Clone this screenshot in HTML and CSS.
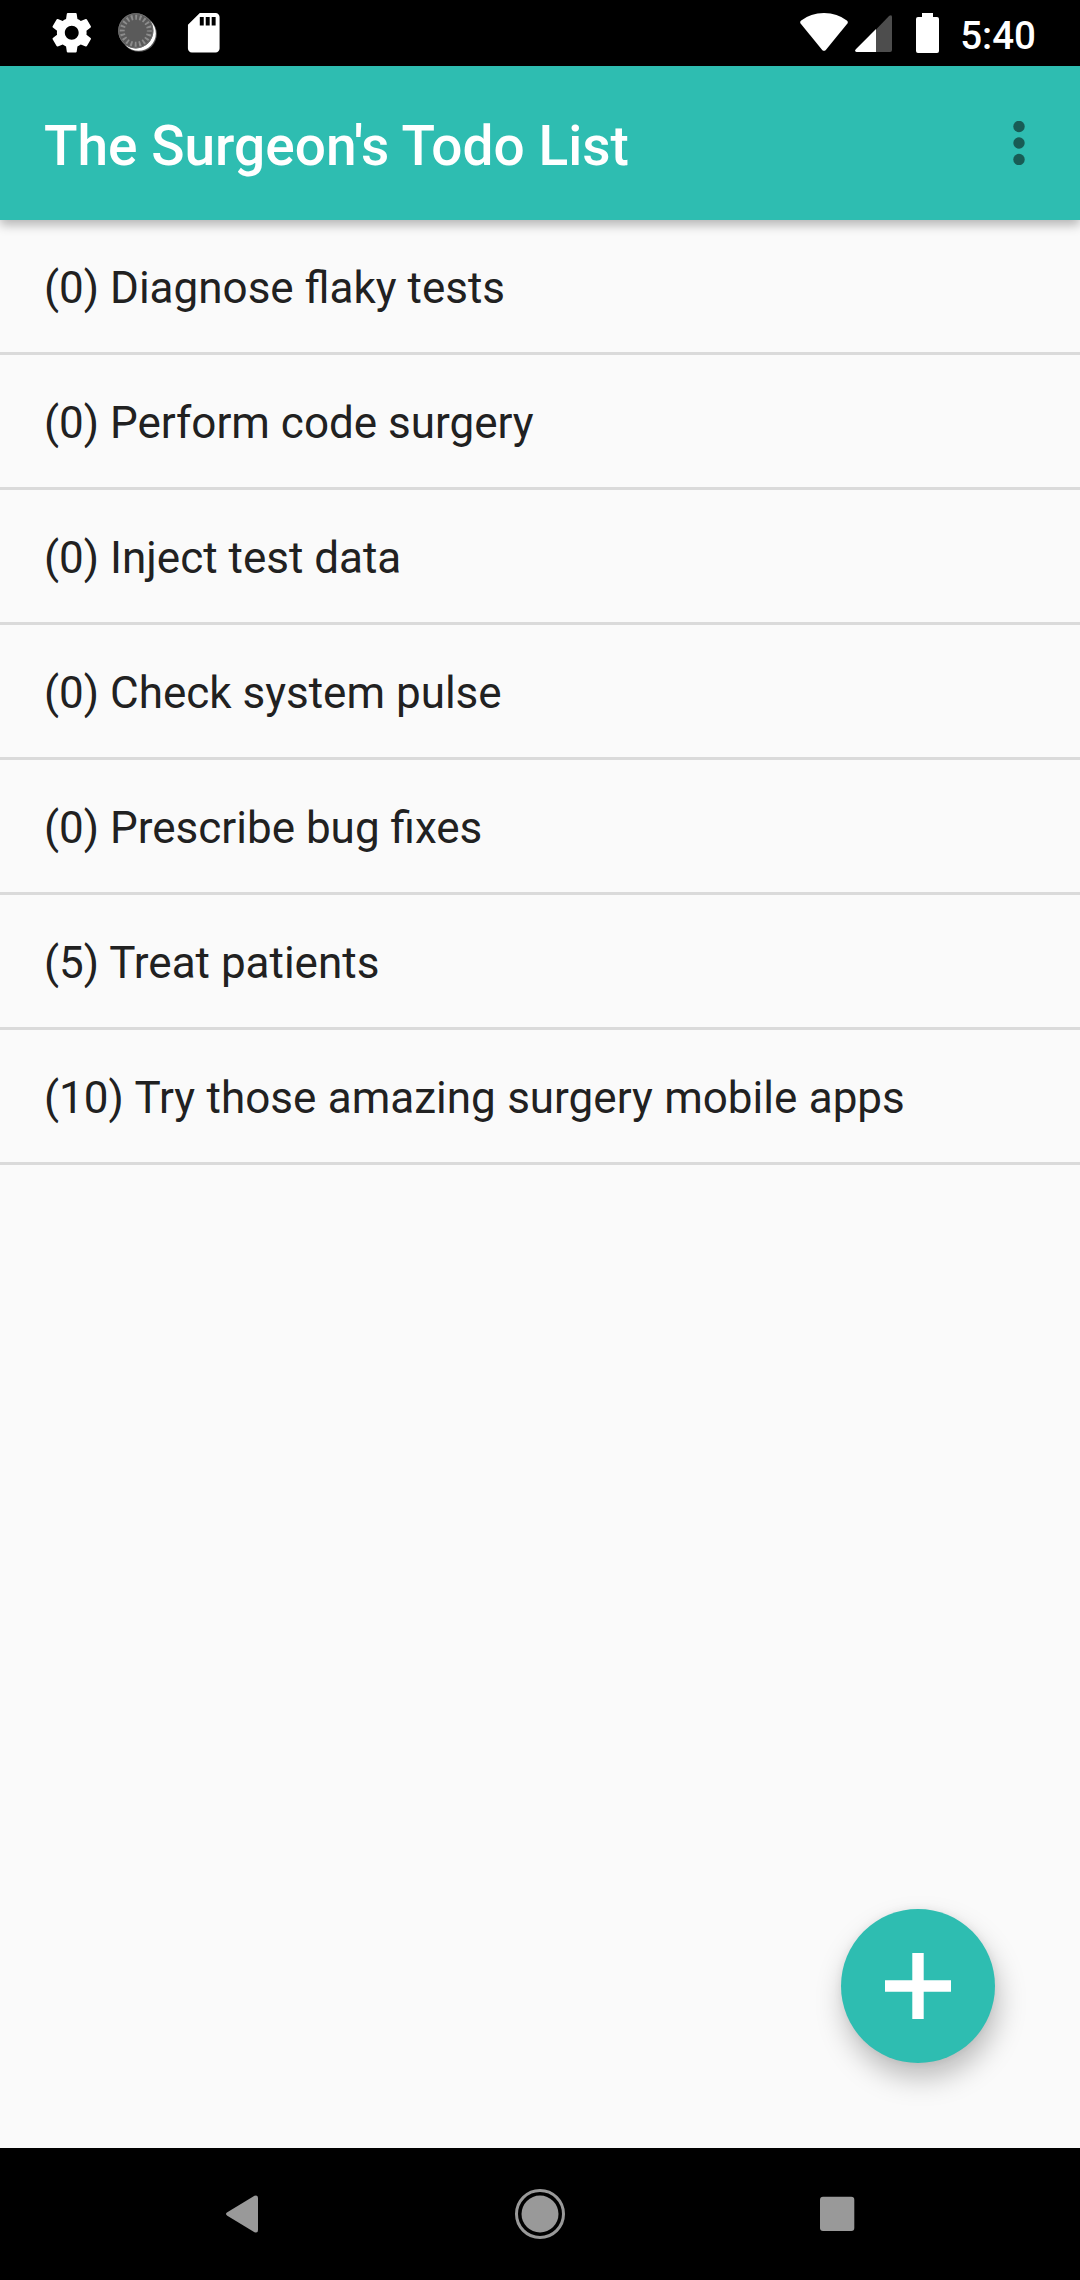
FILE: index.html
```html
<!DOCTYPE html>
<html lang="en">
<head>
<meta charset="utf-8">
<title>The Surgeon's Todo List</title>
<link rel="stylesheet" href="styles.css">
</head>
<body>
<div class="screen">
  <div class="status-bar">
    <div class="notifications">
      <svg class="status-icon" viewBox="0 0 24 24"><path fill="#fff" d="M19.43 12.98c.04-.32.07-.64.07-.98s-.03-.66-.07-.98l2.11-1.65c.19-.15.24-.42.12-.64l-2-3.46c-.12-.22-.39-.3-.61-.22l-2.49 1c-.52-.4-1.08-.73-1.69-.98l-.38-2.65C14.46 2.18 14.25 2 14 2h-4c-.25 0-.46.18-.49.42l-.38 2.65c-.61.25-1.17.59-1.69.98l-2.49-1c-.23-.09-.49 0-.61.22l-2 3.46c-.13.22-.07.49.12.64l2.11 1.65c-.04.32-.07.65-.07.98s.03.66.07.98l-2.11 1.65c-.19.15-.24.42-.12.64l2 3.46c.12.22.39.3.61.22l2.49-1c.52.4 1.08.73 1.69.98l.38 2.65c.03.24.24.42.49.42h4c.25 0 .46-.18.49-.42l.38-2.65c.61-.25 1.17-.59 1.69-.98l2.49 1c.23.09.49 0 .61-.22l2-3.46c.12-.22.07-.49-.12-.64l-2.11-1.65zM12 15.500c-1.93 0-3.500-1.570-3.500-3.500s1.570-3.500 3.500-3.500 3.500 1.570 3.500 3.500-1.570 3.500-3.500 3.500z"/></svg>
      <svg class="status-icon" viewBox="0 0 48 48">
        <circle cx="25.300" cy="25.300" r="18" fill="#555"/>
        <circle cx="24.700" cy="24.700" r="17.600" fill="#fff"/>
        <circle cx="22" cy="22" r="17.800" fill="#5a5a5a"/>
        <circle cx="22" cy="22" r="17.300" fill="none" stroke="#707070" stroke-width="1"/>
        <circle cx="22" cy="22" r="13.700" fill="none" stroke="#8c8c8c" stroke-width="5" stroke-dasharray="1.900 2.404" stroke-dashoffset=".95"/>
      </svg>
      <svg class="status-icon" viewBox="0 0 24 24"><path fill="#fff" d="M18 2h-8L4.020 8 4 20c0 1.100.9 2 2 2h12c1.100 0 2-.9 2-2V4c0-1.100-.9-2-2-2zm-6 6.300h-2V4h2v4.300zm3 0h-2V4h2v4.300zm3 0h-2V4h2v4.300z"/></svg>
    </div>
    <div class="system">
      <svg class="wifi" viewBox="0 0 48 38"><path fill="#fff" d="M.6 10.500Q-.5 9 1.200 7.600Q10.500 0 24 0T46.800 7.600Q48.500 9 47.400 10.500L25.800 36.900Q24 38.800 22.200 36.900Z"/></svg>
      <svg class="signal" viewBox="0 0 37 37"><path fill="#4d4d4d" d="M21 14.500L34.300.8Q37-.8 37 2V35Q37 37 35 37H21Z"/><path fill="#fff" d="M21 14V37H1.500Q-.8 36.500.6 34.500Z"/></svg>
      <svg class="battery" viewBox="0 0 23 40"><path fill="#fff" d="M6 0H17V4H21Q23 4 23 6V38Q23 40 21 40H2Q0 40 0 38V6Q0 4 2 4H6Z"/></svg>
      <span class="clock">5:40</span>
    </div>
  </div>
  <header class="app-bar">
    <h1 class="title">The Surgeon's Todo List</h1>
    <svg class="overflow" viewBox="0 0 12 44"><g fill="#185c55"><circle cx="6" cy="5.500" r="5.700"/><circle cx="6" cy="22" r="5.700"/><circle cx="6" cy="38.500" r="5.700"/></g></svg>
  </header>
  <main class="content">
    <ul class="todo-list">
      <li class="todo">(0) Diagnose flaky tests</li>
      <li class="todo">(0) Perform code surgery</li>
      <li class="todo">(0) Inject test data</li>
      <li class="todo">(0) Check system pulse</li>
      <li class="todo">(0) Prescribe bug fixes</li>
      <li class="todo">(5) Treat patients</li>
      <li class="todo">(10) Try those amazing surgery mobile apps</li>
    </ul>
    <button class="fab" aria-label="Add"><svg class="plus" viewBox="0 0 66 66"><path fill="#fff" d="M27.300 0H38.700V27.300H66V38.700H38.700V66H27.300V38.700H0V27.300H27.300Z"/></svg></button>
  </main>
  <nav class="nav-bar">
    <svg class="nav-icon" viewBox="0 0 52 52"><path fill="#999" d="M11.300 24.300L38.500 7.800Q42 6.500 42 10V42Q42 45.500 38.500 44.200L11.300 27.700Q8.700 26 11.300 24.300Z"/></svg>
    <svg class="nav-icon" viewBox="0 0 52 52"><circle cx="26" cy="26" r="23.500" fill="none" stroke="#999" stroke-width="3"/><circle cx="26" cy="26" r="18.500" fill="#999"/></svg>
    <svg class="nav-icon" viewBox="0 0 52 52"><rect x="9" y="8.700" width="34.300" height="34.300" rx="3" fill="#999"/></svg>
  </nav>
</div>
</body>
</html>
```
FILE: styles.css
```css
* { box-sizing: border-box; }
body {
  margin: 0;
  font-family: Roboto, "Liberation Sans", sans-serif;
}
.screen {
  width: 1080px;
  height: 2280px;
  display: flex;
  flex-direction: column;
  background: #fafafa;
  overflow: hidden;
}
svg { display: block; flex: none; }
.status-bar {
  height: 66px;
  flex: none;
  display: flex;
  justify-content: space-between;
  background: #000;
  color: #fff;
}
.notifications {
  display: flex;
  gap: 18.5px;
  padding: 9px 0 0 48px;
}
.status-icon { width: 47.5px; height: 47.5px; }
.system {
  display: flex;
  padding: 13px 44px 0 0;
}
.wifi { width: 48px; height: 38px; }
.signal { width: 37px; height: 37px; margin: 2px 24px 0 7px; }
.battery { width: 23px; height: 40px; }
.clock {
  margin-left: 21px;
  font-size: 38.5px;
  line-height: 45px;
  font-weight: 500;
}
.app-bar {
  height: 154px;
  flex: none;
  display: flex;
  justify-content: space-between;
  padding: 0 55px 0 44px;
  background: #2ebdb1;
  box-shadow: 0 5px 10px rgba(0, 0, 0, 0.28);
  z-index: 1;
}
.title {
  margin: 0;
  padding-top: 48px;
  font-size: 55px;
  line-height: 65px;
  font-weight: 500;
  color: #fff;
}
.overflow { width: 12px; height: 44px; margin-top: 55px; }
.content {
  flex: 1;
  display: flex;
  flex-direction: column;
  justify-content: space-between;
}
.todo-list { margin: 0; padding: 0; list-style: none; }
.todo {
  height: 135px;
  padding: 3px 44px 0;
  border-bottom: 3px solid #dadada;
  font-size: 44px;
  line-height: 130px;
  color: #212121;
}
.todo:last-child { word-spacing: 0.5px; }
.fab {
  align-self: flex-end;
  width: 154px;
  height: 154px;
  margin: 0 85px 85px 0;
  padding: 0;
  border: 0;
  border-radius: 50%;
  display: grid;
  place-items: center;
  background: #2ebdb1;
  box-shadow: 3px 15px 28px rgba(0, 0, 0, 0.25), 0 0 8px rgba(0, 0, 0, 0.06);
}
.plus { width: 66px; height: 66px; }
.nav-bar {
  height: 132px;
  flex: none;
  display: flex;
  justify-content: space-between;
  align-items: center;
  padding: 0 217px 0 216px;
  background: #000;
}
.nav-icon { width: 52px; height: 52px; }
```
